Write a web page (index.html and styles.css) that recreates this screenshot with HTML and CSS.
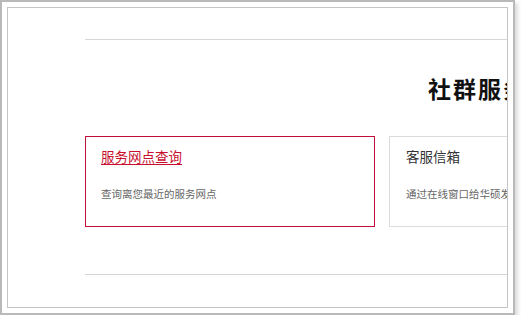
FILE: index.html
```html
<!DOCTYPE html>
<html lang="zh-CN">
<head>
<meta charset="utf-8">
<title>社群服务</title>
<link rel="stylesheet" href="styles.css">
</head>
<body>
<div class="frame">
  <div class="inner">
    <div class="content">
      <hr class="rule rule-top">
      <h2 class="heading">社群服务与支持</h2>
      <div class="cards">
        <div class="card card-active">
          <a class="card-title" href="#">服务网点查询</a>
          <p class="card-desc">查询离您最近的服务网点</p>
        </div>
        <div class="card">
          <span class="card-title">客服信箱</span>
          <p class="card-desc">通过在线窗口给华硕发送您的问题</p>
        </div>
      </div>
      <hr class="rule rule-bottom">
    </div>
  </div>
</div>
</body>
</html>
```
FILE: styles.css
```css
html, body {
  margin: 0;
  padding: 0;
  background: #fff;
}
body {
  font-family: "Noto Sans CJK SC", "Noto Sans", sans-serif;
}
.frame {
  box-sizing: border-box;
  width: 515px;
  height: 315px;
  border: 2px solid #b9b9b9;
  padding: 5px;
  background: #fff;
  box-shadow: 3px 3px 4px rgba(0, 0, 0, 0.14);
}
.inner {
  box-sizing: border-box;
  width: 100%;
  height: 100%;
  border: 1.5px solid #c4c4c4;
  overflow: hidden;
}
.content {
  padding-left: 77px;
  width: 720px;
}
.rule {
  border: 0;
  height: 1px;
  background: #d6d6d6;
  margin: 0;
}
.rule-top {
  margin-top: 31px;
}
.heading {
  margin: 34px 0 0 343px;
  font-size: 23px;
  line-height: 28px;
  letter-spacing: 2px;
  font-weight: 700;
  color: #111;
  white-space: nowrap;
}
.cards {
  display: flex;
  gap: 14px;
  margin-top: 34px;
}
.card {
  box-sizing: border-box;
  width: 290px;
  height: 91px;
  border: 1px solid #dcdcdc;
  padding: 9px 15px 0 16px;
  flex: none;
}
.card-active {
  border-color: #c0103a;
  padding-left: 15px;
}
.card-title {
  display: block;
  font-size: 13.5px;
  line-height: 20px;
  color: #333;
  text-decoration: none;
  white-space: nowrap;
}
.card-active .card-title {
  color: #c8102e;
  text-decoration: underline;
  text-underline-offset: 2px;
}
.card-desc {
  margin: 19px 0 0;
  font-size: 10.5px;
  line-height: 18px;
  color: #666;
  white-space: nowrap;
}
.rule-bottom {
  margin-top: 47px;
}
```
